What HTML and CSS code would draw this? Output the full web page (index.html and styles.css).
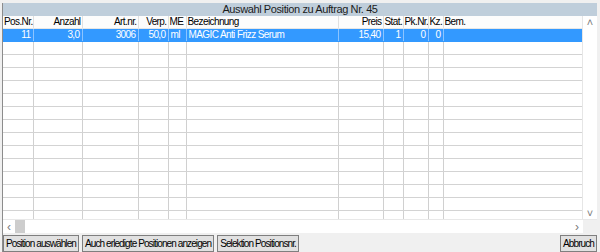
FILE: index.html
```html
<!DOCTYPE html>
<html lang="de">
<head>
    <meta charset="UTF-8">
    <title>Auswahl Position</title>
    <link rel="stylesheet" href="styles.css">
</head>
<body>
    <div class="window">
        <div class="title">Auswahl Position zu Auftrag Nr. 45</div>

        <div class="grid-area">
            <div class="grid-wrap">
                <table class="grid">
                    <colgroup>
                        <col style="width:30px"><col style="width:49px"><col style="width:56px">
                        <col style="width:30px"><col style="width:18px"><col style="width:152px">
                        <col style="width:45px"><col style="width:20px"><col style="width:25px">
                        <col style="width:15px"><col>
                    </colgroup>
                    <thead>
                        <tr>
                            <th>Pos.Nr.</th>
                            <th class="r">Anzahl</th>
                            <th class="r">Art.nr.</th>
                            <th class="r">Verp.</th>
                            <th>ME</th>
                            <th>Bezeichnung</th>
                            <th class="r">Preis</th>
                            <th>Stat.</th>
                            <th>Pk.Nr.</th>
                            <th>Kz.</th>
                            <th>Bem.</th>
                        </tr>
                    </thead>
                    <tbody id="rows">
                        <tr class="selected">
                            <td class="r">11</td>
                            <td class="r">3,0</td>
                            <td class="r">3006</td>
                            <td class="r">50,0</td>
                            <td>ml</td>
                            <td>MAGIC Anti Frizz Serum</td>
                            <td class="r">15,40</td>
                            <td class="r">1</td>
                            <td class="r">0</td>
                            <td class="r">0</td>
                            <td></td>
                        </tr>
                    </tbody>
                </table>
            </div>
            <div class="vscroll">
                <span class="arrow">&#x2C4;</span>
                <span class="arrow">&#x2C5;</span>
            </div>
        </div>

        <div class="hscroll-row">
            <div class="hscroll">
                <span class="arrow">&lsaquo;</span>
                <span class="thumb"></span>
                <span class="spacer"></span>
                <span class="arrow">&rsaquo;</span>
            </div>
            <div class="corner"></div>
        </div>

        <div class="buttons">
            <button class="btn">Position auswählen</button>
            <button class="btn">Auch erledigte Positionen anzeigen</button>
            <button class="btn">Selektion Positionsnr.</button>
            <span class="spacer"></span>
            <button class="btn">Abbruch</button>
        </div>
    </div>

    <script>
        // fill the grid with empty rows
        const rows = document.getElementById('rows');
        for (let i = 0; i < 14; i++) {
            const tr = document.createElement('tr');
            for (let c = 0; c < 11; c++) {
                tr.appendChild(document.createElement('td'));
            }
            rows.appendChild(tr);
        }
    </script>
</body>
</html>
```

FILE: styles.css
```css
body {
    margin: 0;
    background: #f0f0f0;
    font-family: "Liberation Sans", Arial, sans-serif;
    font-size: 10px;
    letter-spacing: -0.6px;
    color: #000;
    height: 252px;
    overflow: hidden;
}

.window {
    margin: 3px 3px 0 2px;
    border-left: 1px solid #8c8c8c;
}

.title {
    height: 13px;
    line-height: 13px;
    background: #bfcedb;
    text-align: center;
    font-size: 11px;
    letter-spacing: -0.4px;
    color: #1b1b1b;
}

.grid-area {
    display: flex;
    height: 203px;
    background: #fff;
}

.grid-wrap {
    width: 580px;
    overflow: hidden;
}

.grid {
    width: 580px;
    table-layout: fixed;
    border-collapse: collapse;
}

.grid th,
.grid td {
    height: 12px;
    padding: 0 2px;
    line-height: 12px;
    white-space: nowrap;
    overflow: hidden;
    border-right: 1px solid #d0d0d0;
    border-bottom: 1px solid #d3d3d3;
    text-align: left;
    font-weight: normal;
}

.grid th {
    padding: 0 1px;
    background: #fcfcfc;
    border-right-color: #e0e0e0;
    border-bottom-color: #e6e6e6;
}

.grid .r {
    text-align: right;
}

.grid tr.selected td {
    background: #3399ff;
    color: #fff;
    border-right-color: #8cc4ff;
    border-bottom-color: #3399ff;
}

.vscroll {
    width: 14px;
    border-left: 1px solid #e6e6e6;
    display: flex;
    flex-direction: column;
    justify-content: space-between;
    align-items: center;
    background: #fff;
}

.arrow {
    color: #7a7a7a;
    font-size: 11px;
    line-height: 12px;
    letter-spacing: 0;
}

.hscroll-row {
    display: flex;
    height: 13px;
    border-top: 1px solid #e8e8e8;
}

.hscroll {
    width: 580px;
    display: flex;
    align-items: center;
    background: #fff;
}

.hscroll .arrow {
    width: 12px;
    text-align: center;
    font-size: 12px;
}

.thumb {
    width: 10px;
    height: 13px;
    background: #cdcdcd;
}

.spacer {
    flex: 1;
}

.corner {
    flex: 1;
    background: #f0f0f0;
}

.buttons {
    display: flex;
    gap: 3px;
    padding-top: 2px;
}

.btn {
    height: 17px;
    padding: 0 2px;
    margin: 0;
    font-family: inherit;
    font-size: 10px;
    letter-spacing: -0.9px;
    background: #e1e1e1;
    border: 1px solid #7f7f7f;
    color: #000;
}
```
